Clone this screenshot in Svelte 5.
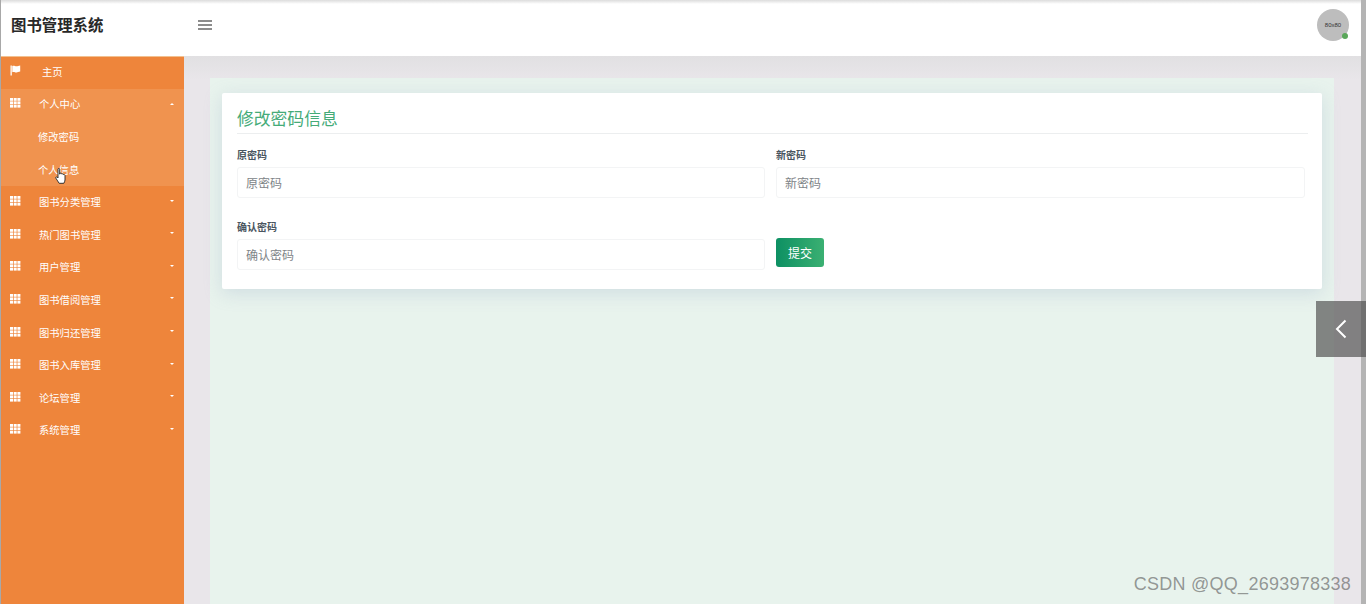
<script lang="ts">
  const menus = ['图书分类管理', '热门图书管理', '用户管理', '图书借阅管理', '图书归还管理', '图书入库管理', '论坛管理', '系统管理'];
  const grid = [0, 1, 2];
</script>

{#snippet gridIcon()}
  <svg class="ico" width="11" height="10" viewBox="0 0 11 10">
    {#each grid as r}
      {#each grid as c}
        <rect x={c * 3.7} y={r * 3.4} width="3" height="2.8" fill="#fff" />
      {/each}
    {/each}
  </svg>
{/snippet}

<div class="page">
  <div class="frame">
    <header class="top">
      <div class="brand">图书管理系统</div>
      <button class="burger" aria-label="menu">
        <span></span><span></span><span></span>
      </button>
      <div class="avatar">
        80x80
        <i class="dot"></i>
      </div>
    </header>

    <div class="body">
      <nav class="side">
        <div class="item home">
          <svg class="ico" width="11" height="11" viewBox="0 0 11 11">
            <path d="M0.500 0.500h1.300v10H.5zM2.300 1c2-.9 3 .6 4.300.3 1-.2 2-.5 3.600-.8v6c-1.600.4-2.600.8-3.600 1-1.300.3-2.300-1-4.300-.3z" fill="#fff" />
          </svg>
          <span class="home-label">主页</span>
        </div>
        <div class="open">
          <div class="item">
            {@render gridIcon()}
            <span class="label">个人中心</span>
            <i class="caret up"></i>
          </div>
          <div class="item sub">修改密码</div>
          <div class="item sub">个人信息</div>
        </div>
        {#each menus as m}
          <div class="item">
            {@render gridIcon()}
            <span class="label">{m}</span>
            <i class="caret"></i>
          </div>
        {/each}
      </nav>

      <main class="main">
        <div class="panel">
          <section class="card">
            <h2>修改密码信息</h2>
            <form class="form" onsubmit={(e) => e.preventDefault()}>
              <div class="field">
                <label for="oldpwd">原密码</label>
                <input id="oldpwd" type="text" placeholder="原密码" />
              </div>
              <div class="field">
                <label for="newpwd">新密码</label>
                <input id="newpwd" type="text" placeholder="新密码" />
              </div>
              <div class="field">
                <label for="repwd">确认密码</label>
                <input id="repwd" type="text" placeholder="确认密码" />
              </div>
              <div class="field end">
                <button class="submit" type="submit">提交</button>
              </div>
            </form>
          </section>
        </div>
      </main>
    </div>
  </div>
  <div class="scroll"></div>

  <!-- mouse pointer caught in the capture -->
  <svg class="hand" width="12" height="17" viewBox="0 0 12 17">
    <path d="M3 1.200c0-1 1.700-1 1.700 0v5l.3-1c1-.3 1.500 0 1.600.7.900-.4 1.500 0 1.600.7 1-.4 1.800.1 1.800 1v4.400c0 1.500-.8 2.200-1.200 3.300H4.200C3.500 14 1.800 12 .9 10.200c-.5-1 .6-1.800 1.400-1L3 10z" fill="#fff" stroke="#222" stroke-width=".9" />
  </svg>

  <button class="tab" aria-label="collapse">
    <svg width="14" height="20" viewBox="0 0 14 20">
      <path d="M11.500 1.500 3 10l8.500 8.500" fill="none" stroke="#fff" stroke-width="2" />
    </svg>
  </button>

  <div class="mark">CSDN @QQ_2693978338</div>
</div>

<style>
  :global(body) {
    margin: 0;
    font-family: "Liberation Sans", "Noto Sans CJK SC", sans-serif;
  }

  .page {
    position: relative;
    display: flex;
    height: 604px;
    overflow: hidden;
    padding-left: 1px;
    background: #a8a8a8;
  }

  .frame {
    flex: 1;
    min-width: 0;
    display: flex;
    flex-direction: column;
    background: #fff;
  }

  .scroll {
    width: 5px;
    background: #b4b4b4;
  }

  .top {
    height: 56px;
    box-sizing: border-box;
    display: flex;
    align-items: center;
    padding: 0 0 6px 10px;
    background: linear-gradient(#dcdcdc, #fff 4px);
  }

  .brand {
    width: 187px;
    margin-bottom: 2px;
    font-size: 15.400px;
    font-weight: 700;
    color: #282828;
  }

  .burger {
    display: flex;
    flex-direction: column;
    gap: 2px;
    width: 14px;
    padding: 0;
    border: 0;
    background: none;
  }

  .burger span {
    height: 2px;
    background: #8c8c8c;
  }

  .avatar {
    position: relative;
    width: 32px;
    height: 32px;
    margin-left: auto;
    margin-right: 12px;
    border-radius: 50%;
    background: #bdbdbd;
    color: #333;
    font-size: 6px;
    line-height: 32px;
    text-align: center;
  }

  .dot {
    position: absolute;
    right: 1px;
    bottom: 2px;
    width: 6px;
    height: 6px;
    border-radius: 50%;
    background: #5aa75a;
  }

  .body {
    flex: 1;
    min-height: 0;
    display: flex;
  }

  .side {
    width: 183px;
    background: #ee853b;
    color: #fff;
    font-size: 10.300px;
    box-shadow: inset 0 1px 0 #f2c08f;
  }

  .item {
    display: flex;
    align-items: center;
    height: 32.600px;
    padding: 0 10px 2px 9px;
    box-sizing: border-box;
  }

  .ico {
    margin-top: -1px;
    flex: none;
  }

  .label {
    margin-left: 18px;
    flex: 1;
  }

  .home-label {
    margin-left: 21px;
  }

  .home .ico {
    margin-top: -2px;
  }

  .open {
    background: #f0934f;
  }

  .sub {
    padding-left: 37px;
  }

  .caret {
    width: 0;
    height: 0;
    margin-top: -2px;
    border-left: 2.500px solid transparent;
    border-right: 2.500px solid transparent;
    border-top: 2.500px solid #fff;
  }

  .caret.up {
    margin-top: 0;
    border-top: 0;
    border-bottom: 2.500px solid #fff;
  }

  .main {
    flex: 1;
    min-width: 0;
    display: flex;
    padding: 22px 27px 0 26px;
    background: linear-gradient(#e1e0e2, #e9e6ea 24px);
  }

  .panel {
    flex: 1;
    min-width: 0;
    padding: 15px 12px 0;
    background: #e8f3ed;
  }

  .card {
    box-sizing: border-box;
    height: 196px;
    padding: 13px 14px 0 15px;
    background: #fff;
    border-radius: 2px;
    box-shadow: 0 4px 18px rgba(150, 170, 200, 0.3);
  }

  h2 {
    margin: 0;
    height: 27px;
    line-height: 27px;
    font-size: 16.800px;
    font-weight: 400;
    color: #45ab78;
    border-bottom: 1px solid #eceeef;
  }

  .form {
    display: grid;
    grid-template-columns: 528px 529px;
    column-gap: 11px;
    row-gap: 15px;
    margin-top: 15px;
  }

  .field {
    display: flex;
    flex-direction: column;
    height: 57px;
  }

  .end {
    justify-content: flex-end;
    padding-bottom: 11px;
    box-sizing: border-box;
  }

  label {
    height: 12px;
    line-height: 13px;
    margin-bottom: 6px;
    font-size: 10px;
    font-weight: 700;
    color: #4a5560;
  }

  input {
    box-sizing: border-box;
    width: 100%;
    height: 31px;
    padding: 3px 8px 0;
    border: 1px solid #f3f4f5;
    border-radius: 3px;
    outline: none;
    font: 12px "Liberation Sans", "Noto Sans CJK SC", sans-serif;
    background: #fff;
  }

  input::placeholder {
    color: #808488;
    opacity: 1;
  }

  .submit {
    width: 48px;
    height: 29px;
    padding: 0;
    border: 0;
    border-radius: 3px;
    color: #fff;
    font: 12px "Liberation Sans", "Noto Sans CJK SC", sans-serif;
    background: linear-gradient(90deg, #0d9063, #3bb072);
  }

  .hand {
    position: absolute;
    left: 55px;
    top: 168px;
  }

  .tab {
    position: absolute;
    right: 0;
    top: 301px;
    width: 50px;
    height: 56px;
    padding: 0;
    border: 0;
    display: flex;
    align-items: center;
    justify-content: center;
    background: rgba(80, 80, 80, 0.68);
  }

  .mark {
    position: absolute;
    right: 15px;
    top: 574px;
    font-size: 18px;
    letter-spacing: 0.25px;
    color: rgba(90, 90, 90, 0.62);
  }
</style>
